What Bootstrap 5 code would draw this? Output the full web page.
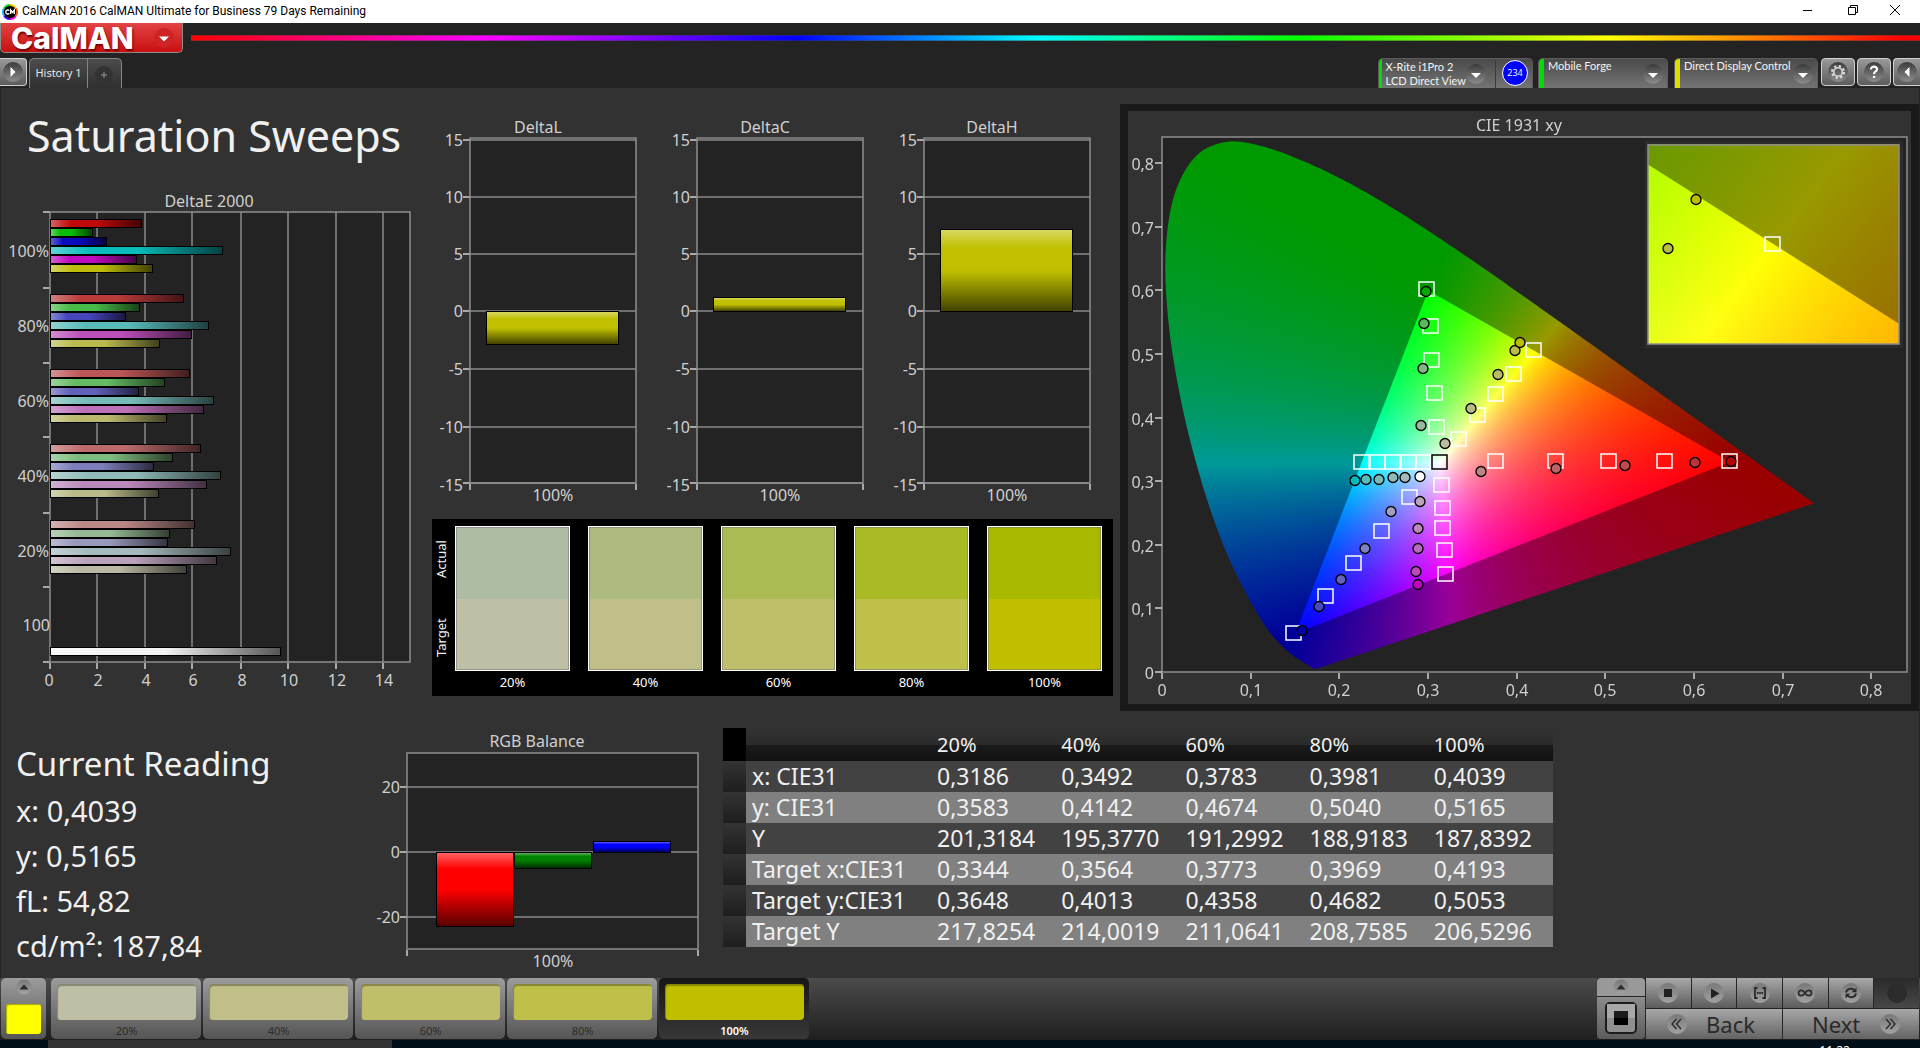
<!DOCTYPE html>
<html lang="en">
<head>
<meta charset="utf-8">
<meta name="viewport" content="width=device-width, initial-scale=1">
<title>CalMAN 2016 CalMAN Ultimate for Business 79 Days Remaining</title>
<link href="https://cdn.jsdelivr.net/npm/bootstrap@5.3.0/dist/css/bootstrap.min.css" rel="stylesheet">
<style>
:root{--ink:#d0d0d0;--panel:#323232;--plot:#232323}
body{font-family:"Noto Sans","Open Sans",sans-serif;background:#232323;color:#f0f0f0;overflow:hidden}
button{font-family:inherit;color:inherit;border:0;padding:0}
svg,canvas{display:block}
svg text{fill:var(--ink);font-size:16px}
.titlebar{height:23px;background:#fff;color:#000;font:12px/23px Roboto,"Noto Sans",sans-serif}
.titlebar .appmark{margin:0 4px 0 2px}
.winbtn{width:45px;height:23px;background:#fff}
.appmenu{width:183px;height:30px;background:linear-gradient(#e24444,#c90f0f);border:1px solid #8d8d8d;border-top:0;border-radius:0 0 5px 5px;color:#fff;padding:0 8px 0 10px}
.wordlogo{font:800 30px/28px Inter,"Noto Sans",sans-serif;text-shadow:1px 2px 2px #700}
.rainbow{height:6px;margin-top:12px;border:1px solid rgba(60,60,60,.45);border-width:1px 0;background:linear-gradient(90deg,#f00,#f0f 17%,#00f 35%,#0ff 49%,#0f0 64%,#ff0 82%,#f00 99%)}
.tabstrip{height:30px;margin-top:5px}
.roundbtn{background:linear-gradient(#9a9a9a,#5c5c5c);border:1px solid #d0d0d0;border-radius:4px;height:28px;width:34px;display:flex;align-items:center;justify-content:center}
.edge-l{width:27px;border-left:0;border-radius:0 4px 4px 0}
.edge-r{width:27px;border-right:0;border-radius:4px 0 0 4px}
.sheet{height:30px;background:linear-gradient(#4c4c4c,#303030);border:1px solid #858585;border-bottom:0;font-size:11px;color:#e8e8e8}
.sheet-a{width:59px;margin-left:2px;border-radius:5px 0 0 0}
.sheet-b{width:34px;border-left:0;border-radius:0 5px 0 0}
.device{height:30px;background:linear-gradient(#4a4a4a,#747474);border:1px solid #5c5c5c;border-bottom:0;border-radius:5px 5px 0 0;font:11px/14px Lato,"Noto Sans",sans-serif;color:#f4f4f4;overflow:hidden}
.device svg{flex:none}
.device .lamp{width:5px;background:#0d0}
.device .lamp-y{background:#e0dc00}
.device .who{flex:1;text-align:left;white-space:nowrap;padding-left:4px}
.device .split{border-left:1px solid #3a3a3a;margin:2px 6px 0 9px}
.reads{flex:none;width:26px;height:26px;margin-top:1px;border-radius:50%;background:#00f;border:1px solid #fff;font:9px/24px "Noto Sans",sans-serif;text-align:center}
.work{background:var(--panel);box-shadow:inset 1px 0 #242424,inset -1px 0 #242424}
.upper{display:grid;grid-template-columns:432fr 688fr 800fr}
.lower{display:grid;grid-template-columns:391fr 332fr 830fr 367fr}
.lower svg{overflow:visible}
.sheet-title{font-size:43px;line-height:58px;font-weight:400;margin:19px 0 0;padding-left:27px;white-space:nowrap}
.swatches{background:#000;height:177px;padding:7px 11px 0 0;font-size:13px;color:#fff}
.sideways{writing-mode:vertical-rl;transform:rotate(180deg);width:23px;height:145px;line-height:18px;color:#f0f0f0;padding:14px 0 14px 4px}
.chip{height:145px;border:1px solid #fff;outline:1px solid rgba(110,110,110,.5);outline-offset:-2px}
.chip div{height:50%}
.chiplabel{line-height:22px}
.cie{border:solid #191919;border-width:7px 8px;margin:16px 1px 0 0;position:relative}
.cie canvas,.cie svg{width:100%}
.cie svg{position:absolute;left:0;top:0}
.reading{padding:30px 0 0 16px;font-size:29px;line-height:45px}
.reading h2{font-size:33px;line-height:45px;font-weight:400;margin:0 0 2px}
.reading p{margin:0}
.datagrid{margin-top:17px;width:100%;table-layout:fixed;font-size:23px;line-height:31px;color:#f0f0f0}
.datagrid th,.datagrid td{font-weight:400;padding:0 0 0 5px;height:31px;white-space:nowrap}
.datagrid thead th{height:33px;font-size:20px;background:linear-gradient(#323232,#2b2b2b 50%,#1b1b1b 51%,#111)}
.datagrid thead th:first-child{background:#000}
.datagrid tbody tr{background:#424242}
.datagrid tbody tr:nth-child(even){background:#808080}
.datagrid tbody th{padding-left:6px}
.datagrid tbody td:first-child{background:linear-gradient(#333,#1e1e1e)}
.dock{height:62px;background:linear-gradient(#4b4b4b,#1f1f1f);padding:0 1px 1px}
.padbtn{background:linear-gradient(#9c9c9c,#555);border-radius:5px;height:61px}
.current{width:45px}
.current svg{margin:1px 0 9px}
.current span{width:35px;height:30px;background:#ff0;border-radius:3px;box-shadow:inset 1px 1px 1px #a8a800}
.patches{gap:2px;margin-left:5px}
.patch{width:150px;padding:5px 5px 0 6px;font-size:11px;line-height:14px;color:#2c2c2c;text-align:center}
.patch span{display:block;height:36px;border-radius:4px;margin-bottom:4px;box-shadow:inset 1px 2px 1px rgba(0,0,0,.3)}
.patch.on{background:linear-gradient(#161616,#383838);color:#fff;font-weight:600}
.tool{height:30px;background:linear-gradient(#a8a8a8,#5c5c5c);flex:1;display:flex;align-items:center;justify-content:center}
.tool.off{background:linear-gradient(#2a2a2a,#484848)}
.tool.raise{flex:0 0 18px;background:#999;border-radius:4px 4px 0 0}
.tool.pattern{background:linear-gradient(#8c8c8c,#5c5c5c);border-radius:0 0 4px 4px}
.nav2{height:30px;background:linear-gradient(#a8a8a8,#636363);flex:1;font-size:22px;line-height:28px;color:#2a2a2a;display:flex;align-items:center;justify-content:space-between;padding:0 19px 0 21px}
.cluster{width:322px;background:#262626}
.cluster,.cluster div{gap:1px}
.side{width:48px}
.tray{height:8px;background:#000f18;overflow:hidden;font-size:12px}
.tray .open{width:344px;margin-left:48px;background:#333}
.tray time{margin:3px 70px 0 auto;line-height:16px;color:#fff}
</style>
</head>
<body>
<svg width="0" height="0" class="position-absolute" aria-hidden="true">
  <defs>
    <linearGradient id="gAcross"><stop offset="0" stop-color="#fff" stop-opacity=".35"/><stop offset=".22" stop-color="#fff" stop-opacity="0"/><stop offset=".5" stop-color="#000" stop-opacity="0"/><stop offset="1" stop-color="#000" stop-opacity=".65"/></linearGradient>
    <linearGradient id="gDown" x2="0" y2="1"><stop offset="0" stop-color="#fff" stop-opacity=".38"/><stop offset=".22" stop-color="#fff" stop-opacity="0"/><stop offset=".5" stop-color="#000" stop-opacity="0"/><stop offset="1" stop-color="#000" stop-opacity=".65"/></linearGradient>
    <linearGradient id="gDisc" x2="0" y2="1"><stop offset="0" stop-color="#3c3c3c"/><stop offset="1" stop-color="#8c8c8c"/></linearGradient>
    <linearGradient id="gDiscLight" x2="0" y2="1"><stop offset="0" stop-color="#787878"/><stop offset="1" stop-color="#a2a2a2"/></linearGradient>
    <symbol id="drop" viewBox="0 0 20 20"><circle cx="10" cy="10" r="10" fill="url(#gDisc)"/><path d="M5 9h10l-5 5z" fill="#fff"/></symbol>
    <symbol id="up" viewBox="0 0 16 16"><circle cx="8" cy="8" r="7.500" fill="url(#gDiscLight)"/><path d="M3.500 10.500h9L8 5.500z" fill="#2b2b2b"/></symbol>
  </defs>
</svg>

<header>
  <div class="titlebar d-flex align-items-center">
    <svg class="appmark" width="16" height="16" viewBox="0 0 16 16" aria-hidden="true">
      <g fill="none" stroke-width="2"><path d="M8 1a7 7 0 0 1 6 3.500" stroke="#fc0"/><path d="M14 4.500a7 7 0 0 1 0 7" stroke="#f50"/><path d="M14 11.500A7 7 0 0 1 8 15" stroke="#f0c"/><path d="M8 15a7 7 0 0 1-6-3.500" stroke="#40f"/><path d="M2 11.500a7 7 0 0 1 0-7" stroke="#0bf"/><path d="M2 4.500A7 7 0 0 1 8 1" stroke="#0d2"/></g>
      <circle cx="8" cy="8" r="6.200" fill="#000"/>
      <path d="M7.300 6.700a2 2 0 1 0 0 2.600M8.700 10V6l1.800 2.400L12.300 6v4" fill="none" stroke="#fff" stroke-width="1.300"/>
    </svg>
    <span class="flex-grow-1">CalMAN 2016 CalMAN Ultimate for Business 79 Days Remaining</span>
    <button class="winbtn" aria-label="Minimize"><svg width="45" height="23"><path d="M18 10.500h9" stroke="#000"/></svg></button>
    <button class="winbtn" aria-label="Restore"><svg width="45" height="23"><path d="M18.500 7.500h7v7h-7zM20.500 7.500v-2h7v7h-2" fill="none" stroke="#000"/></svg></button>
    <button class="winbtn" aria-label="Close"><svg width="45" height="23"><path d="M15 5l10 10M25 5L15 15" stroke="#000"/></svg></button>
  </div>
  <div class="d-flex">
    <button class="appmenu d-flex align-items-center justify-content-between" aria-label="CalMAN menu"><span class="wordlogo">CalMAN</span>
      <svg width="20" height="20" aria-hidden="true"><circle cx="10" cy="10" r="10" fill="#cf2326"/><path d="M5 8.500h10l-5 5z" fill="#fff"/></svg></button>
    <div class="rainbow flex-grow-1 ms-2"></div>
  </div>
  <div class="tabstrip d-flex">
    <button class="roundbtn edge-l" aria-label="Show workflow"><svg width="20" height="20"><circle cx="10" cy="10" r="10" fill="url(#gDisc)"/><path d="M7.500 5v10l5-5z" fill="#fff"/></svg></button>
    <button class="sheet sheet-a">History 1</button>
    <button class="sheet sheet-b d-flex justify-content-center align-items-center" aria-label="Add history"><svg width="20" height="20"><circle cx="9" cy="11" r="9" fill="#333"/><path d="M6 11h6M9 8v6" stroke="#999"/></svg></button>
    <div class="d-flex ms-auto">
      <div class="device d-flex" style="width:155px"><span class="lamp"></span><button class="who bg-transparent">X-Rite i1Pro 2<br>LCD Direct View</button>
        <svg class="align-self-center" width="20" height="20"><use href="#drop"/></svg>
        <span class="split"></span><span class="reads me-1">234</span></div>
      <div class="device d-flex align-items-start" style="width:130px;margin-left:5px"><span class="lamp align-self-stretch"></span><button class="who bg-transparent">Mobile Forge</button><svg class="align-self-center me-1" width="20" height="20"><use href="#drop"/></svg></div>
      <div class="device d-flex align-items-start" style="width:144px;margin-left:6px"><span class="lamp lamp-y align-self-stretch"></span><button class="who bg-transparent">Direct Display Control</button><svg class="align-self-center me-1" width="20" height="20"><use href="#drop"/></svg></div>
    </div>
    <div class="d-flex" style="gap:2px;margin-left:3px">
      <button class="roundbtn" aria-label="Settings"><svg width="20" height="20"><circle cx="10" cy="10" r="10" fill="url(#gDisc)"/><circle cx="10" cy="10" r="4.300" fill="none" stroke="#ddd" stroke-width="1.600"/><circle cx="10" cy="10" r="6" fill="none" stroke="#ddd" stroke-width="2" stroke-dasharray="2.356 2.356"/></svg></button>
      <button class="roundbtn" aria-label="Help"><svg width="20" height="20"><circle cx="10" cy="10" r="10" fill="url(#gDisc)"/><path d="M7 7.500c0-4 6.200-3.800 6 0-.1 2-3 2-3 4.500" fill="none" stroke="#fff" stroke-width="2.200"/><path d="M8.900 13.800h2.300V16H8.900z" fill="#fff"/></svg></button>
      <button class="roundbtn edge-r" aria-label="Collapse"><svg width="20" height="20"><circle cx="10" cy="10" r="10" fill="url(#gDisc)"/><path d="M12.500 5v10l-5-5z" fill="#fff"/></svg></button>
    </div>
  </div>
</header>

<main class="work">
  <div class="upper">
    <section>
      <h1 class="sheet-title">Saturation Sweeps</h1>
      <svg id="deltaE" class="w-100" viewBox="0 165 432 546" role="img" aria-label="DeltaE 2000"></svg>
    </section>
    <section style="padding-right:7px">
      <div id="deltas" class="d-flex"></div>
      <div class="swatches d-flex">
        <div class="sideways d-flex justify-content-between"><span>Target</span><span>Actual</span></div>
        <div id="chips" class="d-flex flex-grow-1 text-center" style="gap:18px"></div>
      </div>
    </section>
    <section class="cie">
      <canvas id="gamut" width="783" height="593"></canvas>
      <svg id="cieMarks" viewBox="1128 111 783 593" role="img" aria-label="CIE 1931 xy"></svg>
    </section>
  </div>
  <div class="lower">
    <section class="reading">
      <h2>Current Reading</h2>
      <p>x: 0,4039</p><p>y: 0,5165</p><p>fL: 54,82</p><p>cd/m²: 187,84</p>
    </section>
    <svg id="balance" class="w-100" viewBox="391 711 332 267" role="img" aria-label="RGB Balance"></svg>
    <div>
      <table class="datagrid">
        <colgroup><col style="width:23px"><col style="width:186px"><col><col><col><col><col></colgroup>
        <thead><tr><th></th><th></th><th>20%</th><th>40%</th><th>60%</th><th>80%</th><th>100%</th></tr></thead>
        <tbody>
          <tr><td></td><th>x: CIE31</th><td>0,3186</td><td>0,3492</td><td>0,3783</td><td>0,3981</td><td>0,4039</td></tr>
          <tr><td></td><th>y: CIE31</th><td>0,3583</td><td>0,4142</td><td>0,4674</td><td>0,5040</td><td>0,5165</td></tr>
          <tr><td></td><th>Y</th><td>201,3184</td><td>195,3770</td><td>191,2992</td><td>188,9183</td><td>187,8392</td></tr>
          <tr><td></td><th>Target x:CIE31</th><td>0,3344</td><td>0,3564</td><td>0,3773</td><td>0,3969</td><td>0,4193</td></tr>
          <tr><td></td><th>Target y:CIE31</th><td>0,3648</td><td>0,4013</td><td>0,4358</td><td>0,4682</td><td>0,5053</td></tr>
          <tr><td></td><th>Target Y</th><td>217,8254</td><td>214,0019</td><td>211,0641</td><td>208,7585</td><td>206,5296</td></tr>
        </tbody>
      </table>
    </div>
  </div>
</main>

<footer>
  <div class="dock d-flex">
    <button class="padbtn current d-flex flex-column align-items-center" aria-label="Pattern colour">
      <svg width="16" height="16"><use href="#up"/></svg>
      <span></span></button>
    <div id="patches" class="patches d-flex"></div>
    <div class="cluster d-flex ms-auto">
      <div class="side d-flex flex-column">
        <button class="tool raise" aria-label="Expand"><svg width="16" height="16"><use href="#up"/></svg></button>
        <button class="tool pattern" aria-label="Pattern window"><svg width="32" height="32"><rect x="1" y="1" width="30" height="30" rx="4" fill="#8f8f8f" stroke="#1c1c1c" stroke-width="2"/><path d="M2 2h28v14H2z" fill="#a8a8a8"/><path d="M9 9h14v14H9z"/><path d="M9 9h14v7H9z" fill="#1c1c1c"/></svg></button>
      </div>
      <div class="d-flex flex-column flex-grow-1">
        <div class="d-flex">
          <button class="tool" aria-label="Stop"><svg width="20" height="20"><circle cx="10" cy="10" r="10" fill="url(#gDiscLight)"/><path d="M6 6h8v8H6z" fill="#222"/></svg></button>
          <button class="tool" aria-label="Play"><svg width="20" height="20"><circle cx="10" cy="10" r="10" fill="url(#gDiscLight)"/><path d="M7 5.500v10l8.500-5z" fill="#222"/></svg></button>
          <button class="tool" aria-label="Read series"><svg width="20" height="20"><circle cx="10" cy="10" r="10" fill="url(#gDiscLight)"/><path d="M7.500 5H5v10h2.500M12.500 5H15v10h-2.500" fill="none" stroke="#2a2a2a" stroke-width="1.800"/><path d="M7 10h6" stroke="#2a2a2a" stroke-width="2" stroke-dasharray="1.600 .6"/></svg></button>
          <button class="tool" aria-label="Continuous"><svg width="20" height="20"><circle cx="10" cy="10" r="10" fill="url(#gDiscLight)"/><path d="M10 10c-2-3.500-6.500-3.500-6.500 0s4.500 3.500 6.500 0 6.500-3.500 6.500 0-4.500 3.500-6.500 0z" fill="none" stroke="#2a2a2a" stroke-width="1.700"/></svg></button>
          <button class="tool" aria-label="Refresh"><svg width="20" height="20"><circle cx="10" cy="10" r="10" fill="url(#gDiscLight)"/><path d="M5 9.500c.8-4 6-5 8.500-2M15 10.500c-.8 4-6 5-8.500 2" fill="none" stroke="#2a2a2a" stroke-width="1.900"/><path d="M15.500 4.500v4.800h-4.800zM4.500 15.500v-4.800h4.800z" fill="#2a2a2a"/></svg></button>
          <button class="tool off" aria-label="Busy" disabled><svg width="20" height="20"><circle cx="10" cy="10" r="10" fill="#2c2c2c"/></svg></button>
        </div>
        <div class="d-flex">
          <button class="nav2"><svg width="20" height="20"><circle cx="10" cy="10" r="10" fill="url(#gDiscLight)"/><path d="M9.500 5L5 10l4.500 5M14 5l-4.500 5 4.500 5" fill="none" stroke="#2a2a2a" stroke-width="1.400"/></svg><span class="me-2">Back</span></button>
          <button class="nav2"><span class="ms-2">Next</span><svg width="20" height="20"><circle cx="10" cy="10" r="10" fill="url(#gDiscLight)"/><path d="M6 5l4.500 5L6 15M10.500 5l4.500 5-4.500 5" fill="none" stroke="#2a2a2a" stroke-width="1.400"/></svg></button>
        </div>
      </div>
    </div>
  </div>
  <div class="tray d-flex"><span class="open"></span><time>11:22</time></div>
</footer>

<script src="https://cdn.jsdelivr.net/npm/bootstrap@5.3.0/dist/js/bootstrap.bundle.min.js"></script>
<script>
const rect = (x, y, w, h, rest) => `<rect x="${x}" y="${y}" width="${w}" height="${h}" ${rest}/>`;
const line = (x1, y1, x2, y2, c = '#8a8a8a') => `<path d="M${x1} ${y1}L${x2} ${y2}" stroke="${c}" stroke-width="1.500"/>`;
const label = (x, y, s, a = 'middle') => `<text x="${x}" y="${y}" text-anchor="${a}">${s}</text>`;
const bar = (x, y, w, h, c, g) => rect(x, y, w, h, 'fill="#000"') +
  rect(x + 1, y + 1, w - 2, h - 2, `fill="${c}"`) + rect(x + 1, y + 1, w - 2, h - 2, `fill="url(#${g})"`);
const frame = (x, y, w, h) => rect(x, y, w, h, 'fill="none" stroke="#8f8f8f" stroke-width="1.500"');
const plotBg = (x, y, w, h) => rect(x, y, w, h, 'fill="#232323"');

/* DeltaE 2000: six bars (R G B C M Y) for each saturation level */
{
  const rows = [
    ['100%', 219, [142, 93, 107, 223, 137, 153], ['#c00a0a', '#0bbd0b', '#0a0abf', '#0bbcbc', '#bf0abf', '#bdbd0a']],
    ['80%', 294, [184, 140, 126, 209, 192, 160], ['#bc3b3b', '#48bb48', '#4646bb', '#58bbb8', '#bb50b8', '#bbba4e']],
    ['60%', 369, [190, 165, 139, 214, 204, 167], ['#bd5656', '#64bb64', '#6262ba', '#76bbb8', '#bb70b8', '#bab96c']],
    ['40%', 444, [201, 173, 154, 221, 207, 159], ['#bc6a6a', '#7ebb7e', '#7d7dbc', '#8fbab8', '#ba88ba', '#babb88']],
    ['20%', 520, [195, 170, 168, 231, 217, 187], ['#bb8a88', '#97b996', '#9898bb', '#a4babc', '#bba2bb', '#bbb9a2']]];
  let s = label(209, 207, 'DeltaE 2000') + plotBg(50, 212, 360, 450);
  [97, 145, 192, 241, 288, 336, 383].forEach((x, i) => s += line(x, 212, x, 662) + line(x, 663, x, 669, '#d0d0d0') + label(x + 1, 686, 2 * (i + 1)));
  s += line(50, 663, 50, 669, '#d0d0d0') + label(49, 686, '0');
  [212, 288, 363, 437, 513, 587, 662].forEach(y => s += line(43, y, 50, y, '#d0d0d0'));
  s += frame(50, 212, 360, 450);
  rows.forEach(([name, top, ends, cols], r) => {
    s += label(49, 257 + 75 * r, name, 'end');
    ends.forEach((e, i) => s += bar(50, Math.round(top + 8.9 * i), e - 50, 9, cols[i], 'gAcross'));
  });
  s += label(50, 631, '100', 'end') + bar(50, 647, 231, 9, '#f4f4f4', 'gAcross');
  deltaE.innerHTML = s;
}

/* DeltaL, DeltaC, DeltaH for the selected level */
[['DeltaL', 311, 345], ['DeltaC', 297, 312], ['DeltaH', 229, 312]].forEach(([name, a, b]) => {
  let s = label(538, 133, name) + plotBg(470, 137, 166, 346);
  [140, 197, 254, 311, 369, 427, 483].forEach((y, i) => s += line(470, y, 636, y) + line(463, y, 470, y, '#d0d0d0') + label(463, i < 6 ? y + 6 : 491, 15 - 5 * i, 'end'));
  s += frame(470, 138, 166, 345) + line(470, 484, 470, 490, '#d0d0d0') + line(636, 484, 636, 490, '#d0d0d0') + label(553, 501, '100%');
  s += bar(486, a, 133, b - a, '#c0c000', 'gDown');
  deltas.insertAdjacentHTML('beforeend', `<svg class="w-100" viewBox="432 88 227 431" role="img" aria-label="${name}">${s}</svg>`);
});

/* RGB balance */
{
  let s = label(537, 747, 'RGB Balance') + plotBg(407, 753, 291, 196);
  [[787, 20], [852, 0], [917, -20]].forEach(([y, v]) => s += line(407, y, 698, y) + line(400, y, 407, y, '#d0d0d0') + label(400, y + 6, v, 'end'));
  s += frame(407, 753, 291, 196) + line(407, 950, 407, 956, '#d0d0d0') + line(698, 950, 698, 956, '#d0d0d0') + label(553, 967, '100%');
  s += bar(436, 852, 78, 75, '#ff0000', 'gDown') + bar(514, 852, 78, 17, '#008000', 'gDown') + bar(593, 841, 78, 12, '#0000ff', 'gDown');
  balance.innerHTML = s;
}

/* Actual / target swatches and the pattern buttons */
[['20%', '#aebba5', '#bfbfa6'], ['40%', '#adbb7e', '#c0bf88'], ['60%', '#abbb53', '#bfbf6b'], ['80%', '#aaba25', '#bfc04a'], ['100%', '#a9b900', '#bfbf00']].forEach(([n, actual, target], i) => {
  chips.insertAdjacentHTML('beforeend', `<div class="flex-fill" style="flex-basis:0!important"><div class="chip"><div style="background:${actual}"></div><div style="background:${target}"></div></div><div class="chiplabel">${n}</div></div>`);
  patches.insertAdjacentHTML('beforeend', `<button class="padbtn patch${i == 4 ? ' on' : ''}"><span style="background:${target}"></span>${n}</button>`);
});

/* CIE 1931 xy diagram */
{
  const X = x => 34 + 887.5 * x, Y = y => 561 - 636 * y;
  const locus = [[.1741,.005],[.1738,.0049],[.1733,.0048],[.1726,.0048],[.1714,.0051],[.1689,.0069],[.1644,.0109],[.1566,.0177],[.144,.0297],[.1241,.0578],[.1096,.0868],[.0913,.1327],[.0687,.2007],[.0454,.295],[.0235,.4127],[.0082,.5384],[.0039,.6548],[.0139,.7502],[.0389,.812],[.0743,.8338],[.1142,.8262],[.1547,.8059],[.1929,.7816],[.2296,.7543],[.2658,.7243],[.3016,.6923],[.3373,.6589],[.3731,.6245],[.4087,.5896],[.4441,.5547],[.4788,.5202],[.5125,.4866],[.5448,.4544],[.5752,.4242],[.6029,.3965],[.627,.3725],[.6482,.3514],[.6658,.334],[.6801,.3197],[.6915,.3083],[.7079,.292],[.719,.2809],[.73,.27],[.7347,.2653]];
  const tri = [[.64, .33], [.3, .6], [.15, .06]];
  const rgb = (x, y) => {
    y = Math.max(y, 1e-4);
    const a = x / y, b = (1 - x - y) / y;
    const c = [3.2406 * a - 1.5372 - .4986 * b, -.9689 * a + 1.8758 + .0415 * b, .0557 * a - .204 + 1.057 * b].map(v => Math.max(v, 0));
    const m = Math.max(...c) || 1;
    return c.map(v => v / m * 255);
  };
  const fill = (w, h, toX, toY, k) => {
    const c = document.createElement('canvas'); c.width = w; c.height = h;
    const g = c.getContext('2d'), d = g.createImageData(w, h);
    for (let j = 0, p = 0; j < h; j++) for (let i = 0; i < w; i++, p += 4) {
      const v = rgb(toX(i), toY(j));
      d.data[p] = v[0] * k; d.data[p + 1] = v[1] * k; d.data[p + 2] = v[2] * k; d.data[p + 3] = 255;
    }
    g.putImageData(d, 0, 0);
    return c;
  };
  const g = gamut.getContext('2d');
  const clip = (pts, fx, fy, img, x, y) => {
    g.save(); g.beginPath(); pts.forEach(p => g.lineTo(fx(p[0]), fy(p[1]))); g.closePath(); g.clip(); g.drawImage(img, x, y); g.restore();
  };
  /* Catmull-Rom subdivision keeps the spectral curve smooth */
  const smooth = [];
  locus.forEach((p1, i) => {
    if (i == locus.length - 1) return smooth.push(p1);
    const p0 = locus[i - 1] || p1, p2 = locus[i + 1], p3 = locus[i + 2] || p2;
    for (let t = 0; t < 1; t += .125) smooth.push([0, 1].map(k => .5 * (2 * p1[k] + (p2[k] - p0[k]) * t + (2 * p0[k] - 5 * p1[k] + 4 * p2[k] - p3[k]) * t * t + (3 * p1[k] - p0[k] - 3 * p2[k] + p3[k]) * t * t * t)));
  });
  g.fillStyle = '#323232'; g.fillRect(0, 0, 783, 593);
  g.fillStyle = '#232323'; g.fillRect(34, 26, 746, 535);
  const toX = i => (i - 34) / 887.5, toY = j => (561 - j) / 636;
  clip(smooth, X, Y, fill(783, 561, toX, toY, .6), 0, 0);
  clip(tri, X, Y, fill(783, 561, toX, toY, 1), 0, 0);
  /* magnified view round the 100% yellow target */
  g.fillStyle = '#2c2c2c'; g.fillRect(517, 30, 258, 207);
  const zx = x => 645.5 + 5000 * (x - .4193), zy = y => 133 - 3990 * (y - .5053);
  const ix = i => .4193 + (i + 520 - 645.5) / 5000, iy = j => .5053 - (j + 33 - 133) / 3990;
  g.drawImage(fill(251, 200, ix, iy, .6), 520, 33);
  g.save(); g.beginPath(); g.rect(520, 33, 251, 200); g.clip();
  clip(tri, zx, zy, fill(251, 200, ix, iy, 1), 520, 33); g.restore();

  let s = label(1519, 131, 'CIE 1931 xy') + frame(1162, 137, 745, 535) + frame(1648, 145, 251, 199);
  for (let i = 0; i <= 8; i++) {
    const n = i ? '0,' + i : '0', x = Math.round(1162 + 88.65 * i), y = Math.round(672 - 63.6 * i);
    s += line(x, 673, x, 679, '#d0d0d0') + label(x, 696, n) + line(1155, y, 1162, y, '#d0d0d0') + label(1154, y + 7, n, 'end');
  }
  const box = (x, y, c = '#fff') => rect(x - 7, y - 7, 15, 14, `fill="none" stroke="${c}" stroke-width="1.500"`);
  const dot = (x, y, c) => `<circle cx="${x + 1}" cy="${y + .5}" r="5" fill="${c}" stroke="#000" stroke-width="1.300"/>`;
  [[1426,289],[1430,326],[1431,360],[1434,393],[1436,427],[1533,350],[1513,374],[1495,394],[1477,415],[1458,439],[1361,462],[1377,462],[1392,462],[1408,462],[1423,462],[1495,461],[1555,461],[1608,461],[1664,461],[1729,461],[1441,485],[1442,508],[1442,528],[1444,550],[1445,574],[1409,497],[1381,531],[1353,563],[1325,596],[1293,633],[1772,244]].forEach(p => s += box(...p));
  s += box(1439, 462, '#000');
  [[1425,291,'#00a800'],[1423,323,'#5cb85c'],[1422,368,'#80b880'],[1420,425,'#9ab89a'],
   [1444,443,'#bcbca0'],[1470,408,'#bcbc80'],[1497,374,'#bcbc68'],[1514,350,'#bcbc48'],[1519,342,'#bcbc00'],
   [1480,471,'#bc8484'],[1555,468,'#bc6464'],[1624,465,'#bc4c4c'],[1694,462,'#bc3434'],[1730,461,'#b80000'],
   [1354,480,'#00bcbc'],[1365,479,'#58bcb8'],[1378,479,'#76bcb8'],[1392,477,'#90bab8'],[1404,477,'#a4babc'],[1419,476,'#fff'],
   [1419,501,'#bca4bc'],[1417,528,'#bc88bc'],[1417,548,'#bc68bc'],[1415,571,'#bc48bc'],[1417,584,'#bc00bc'],
   [1390,511,'#a0a0c4'],[1364,548,'#8080c0'],[1340,579,'#6464c0'],[1318,606,'#4848c0'],[1301,630,'#0000a8'],
   [1695,199,'#bcbc00'],[1667,248,'#bcbc48']].forEach(p => s += dot(...p));
  cieMarks.innerHTML = s;
}
</script>
</body>
</html>
